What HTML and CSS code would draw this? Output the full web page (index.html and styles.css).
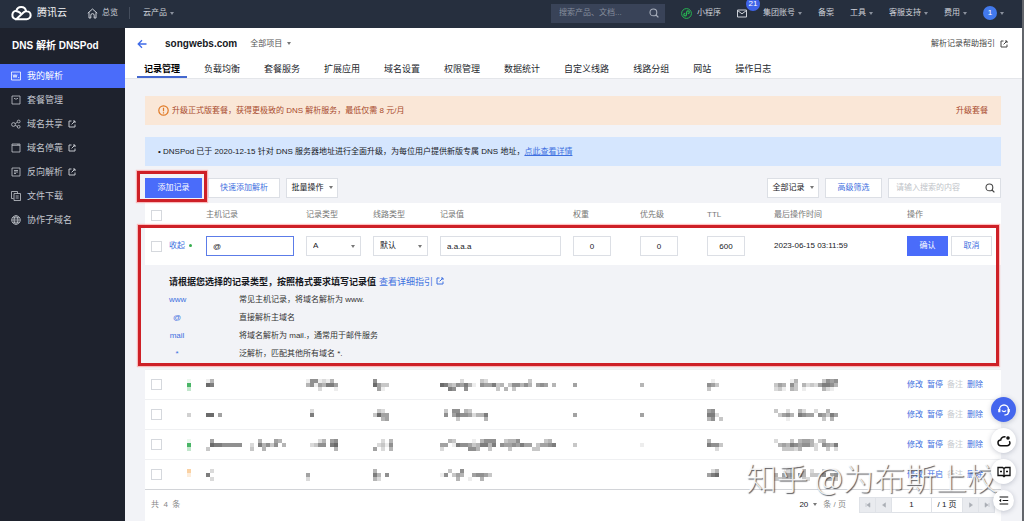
FILE: index.html
```html
<!DOCTYPE html>
<html lang="zh-CN">
<head>
<meta charset="utf-8">
<title>我的解析 - DNSPod</title>
<link rel="stylesheet" href="styles.css">
</head>
<body>
<svg class="defs" width="0" height="0" aria-hidden="true">
  <symbol id="ext" viewBox="0 0 8 8"><path d="M3.5 1H1v6h6V4.500M5 1h2v2M7 1 3.600 4.400" fill="none" stroke="currentColor" stroke-width="1"/></symbol>
  <symbol id="search" viewBox="0 0 10 10"><circle cx="4.400" cy="4.400" r="3.400" fill="none" stroke="currentColor" stroke-width="1.100"/><path d="m7 7 2.400 2.400" stroke="currentColor" stroke-width="1.200"/></symbol>
</svg>

<header class="topbar">
  <a class="brand" href="#">
    <svg width="21" height="16" viewBox="0 0 21 16" fill="none" stroke="#fff" stroke-width="2" stroke-linecap="round"><path d="M4.800 14.200h10.700a4 4 0 0 0 .3-8 3.900 3.900 0 0 0-3.400 1.300L5.500 14"/><path d="M15 5.900a4.900 4.900 0 0 0-9.600-.2 4.300 4.300 0 0 0-.6 8.500"/><path d="M5.600 6.200c1.600 0 2.500.6 3.700 1.800"/></svg>
    <span>腾讯云</span>
  </a>
  <a class="home" href="#">
    <svg width="11" height="11" viewBox="0 0 11 11" fill="none" stroke="currentColor"><path d="M.8 5.200 5.500 1l4.700 4.200M2 4.300V10h1.800V7.300a1.700 1.700 0 0 1 3.400 0V10H9V4.300"/></svg>
    总览
  </a>
  <a class="products caret" href="#">云产品</a>
  <nav class="topnav">
    <label class="topsearch"><input type="text" placeholder="搜索产品、文档..." aria-label="搜索产品、文档"><svg width="10" height="10"><use href="#search"/></svg></label>
    <a class="mini" href="#"><svg width="11" height="11" viewBox="0 0 11 11" fill="none" stroke="#27b552"><circle cx="5.500" cy="5.500" r="4.900"/><path d="M4.300 5.300a1.300 1.300 0 1 0 1.100 1.500L5.700 4a1.300 1.300 0 1 1 1.100 1.500" stroke-width="1.200"/></svg>小程序</a>
    <a class="mail" href="#" aria-label="消息"><svg width="10" height="9" viewBox="0 0 10 9" fill="none" stroke="currentColor"><path d="M.5 1h9v7h-9zM.5 1.500 5 4.800l4.500-3.300"/></svg><span class="badge">21</span></a>
    <a class="caret" href="#">集团账号</a>
    <a href="#">备案</a>
    <a class="caret" href="#">工具</a>
    <a class="caret" href="#">客服支持</a>
    <a class="caret" href="#">费用</a>
    <button class="user caret" type="button"><span>1</span></button>
  </nav>
</header>

<div class="shell">
  <aside class="sidebar">
    <h2>DNS 解析 DNSPod</h2>
    <a class="active" href="#"><svg class="ico" viewBox="0 0 10 10"><path d="M.5 1h9v8h-9zM2 3.500l1 3 1-3 1 3 1-3M7.200 6.500h1"/></svg>我的解析</a>
    <a href="#"><svg class="ico" viewBox="0 0 10 10"><path d="M1 1h8v8H1zM3 3.500h1.200l.8 1 .8-1H7"/></svg>套餐管理</a>
    <a href="#"><svg class="ico" viewBox="0 0 10 10"><circle cx="2.500" cy="5.500" r="1.900"/><circle cx="7.700" cy="2.500" r="1.400"/><circle cx="7.700" cy="7.800" r="1.400"/><path d="m4.200 4.600 2.200-1.400M4.200 6.400l2.200 1"/></svg>域名共享<svg class="ext"><use href="#ext"/></svg></a>
    <a href="#"><svg class="ico" viewBox="0 0 10 10"><path d="M1 1h8v8H1zM1 2.300h8M7 1v1"/></svg>域名停靠<svg class="ext"><use href="#ext"/></svg></a>
    <a href="#"><svg class="ico" viewBox="0 0 10 10"><path d="M1 1h8v8H1zM3 3.500h4M3 5h4M3 6.500h2"/></svg>反向解析<svg class="ext"><use href="#ext"/></svg></a>
    <a href="#"><svg class="ico" viewBox="0 0 10 10"><path d="M2.500 7.500h-2v-7h6v2M3 2.500h6.500v7H3zM4.700 5h3M4.700 7h3"/></svg>文件下载</a>
    <a href="#"><svg class="ico" viewBox="0 0 10 10"><circle cx="5" cy="5" r="4.300"/><ellipse cx="5" cy="5" rx="1.900" ry="4.300"/><path d="M.7 5h8.600M1.300 2.800h7.400M1.300 7.200h7.400"/></svg>协作子域名</a>
  </aside>

  <main class="main">
    <section class="pagehead">
      <div class="titlebar">
        <a class="back" href="#" aria-label="返回"><svg width="10" height="10" viewBox="0 0 10 10" fill="none" stroke="#3e6ae8" stroke-width="1.300"><path d="M9.500 5H1.200M5 1.200 1.200 5 5 8.800"/></svg></a>
        <h1>songwebs.com</h1>
        <button class="project caret" type="button">全部项目</button>
        <a class="guide" href="#">解析记录帮助指引<svg class="ext"><use href="#ext"/></svg></a>
      </div>
      <nav class="tabs">
        <a class="active" href="#">记录管理</a><a href="#">负载均衡</a><a href="#">套餐服务</a><a href="#">扩展应用</a><a href="#">域名设置</a><a href="#">权限管理</a><a href="#">数据统计</a><a href="#">自定义线路</a><a href="#">线路分组</a><a href="#">网站</a><a href="#">操作日志</a>
      </nav>
    </section>

    <section class="content">
      <div class="notice warn">
        <svg width="11" height="11" viewBox="0 0 11 11" fill="none" stroke="#e07a26" stroke-width="1.200"><circle cx="5.500" cy="5.500" r="4.700"/><path d="M5.500 2.700v3.600M5.500 7.200v1.200"/></svg>
        <span>升级正式版套餐，获得更极致的 DNS 解析服务，最低仅需 8 元/月</span>
        <a href="#">升级套餐</a>
      </div>
      <div class="notice info">
        <span>• DNSPod 已于 2020-12-15 针对 DNS 服务器地址进行全面升级，为每位用户提供新版专属 DNS 地址，<a href="#">点此查看详情</a></span>
      </div>

      <div class="toolbar">
        <span class="marked"><button class="btn primary wide" type="button">添加记录</button></span>
        <button class="btn link wider" type="button">快速添加解析</button>
        <button class="btn menu caret" type="button">批量操作</button>
        <span class="spacer"></span>
        <button class="btn menu caret" type="button">全部记录</button>
        <button class="btn link wide" type="button">高级筛选</button>
        <label class="search"><input type="text" placeholder="请输入搜索的内容" aria-label="搜索记录"><svg width="10" height="10"><use href="#search"/></svg></label>
      </div>

      <table class="records">
        <colgroup><col class="c-check"><col class="c-status"><col class="c-host"><col class="c-std"><col class="c-std"><col><col class="c-std"><col class="c-std"><col class="c-std"><col class="c-time"><col class="c-ops"></colgroup>
        <thead>
          <tr><th class="check"><input type="checkbox" aria-label="全选"></th><th></th><th>主机记录</th><th>记录类型</th><th>线路类型</th><th>记录值</th><th>权重</th><th>优先级</th><th>TTL</th><th>最后操作时间</th><th>操作</th></tr>
        </thead>
        <tbody class="editing">
          <tr class="edit">
            <td class="check"><input type="checkbox" aria-label="选择记录"></td>
            <td><a href="#">收起</a><i class="dot"></i></td>
            <td><input class="field host" type="text" value="@" aria-label="主机记录"></td>
            <td><span class="pick caret"><select class="field" aria-label="记录类型"><option>A</option></select></span></td>
            <td><span class="pick caret"><select class="field" aria-label="线路类型"><option>默认</option></select></span></td>
            <td><input class="field value" type="text" value="a.a.a.a" aria-label="记录值"></td>
            <td><input class="field num" type="text" value="0" aria-label="权重"></td>
            <td><input class="field num" type="text" value="0" aria-label="优先级"></td>
            <td><input class="field num" type="text" value="600" aria-label="TTL"></td>
            <td>2023-06-15 03:11:59</td>
            <td><div class="confirm"><button class="btn primary" type="button">确认</button><button class="btn link" type="button">取消</button></div></td>
          </tr>
          <tr class="help">
            <td colspan="11">
              <h3>请根据您选择的记录类型，按照格式要求填写记录值 <a href="#">查看详细指引<svg class="ext"><use href="#ext"/></svg></a></h3>
              <dl>
                <dt>www</dt><dd>常见主机记录，将域名解析为 www.</dd>
                <dt>@</dt><dd>直接解析主域名</dd>
                <dt>mail</dt><dd>将域名解析为 mail.，通常用于邮件服务</dd>
                <dt>*</dt><dd>泛解析，匹配其他所有域名 *.</dd>
              </dl>
            </td>
          </tr>
        </tbody>
        <tbody class="rows" id="rows"></tbody>
      </table>

      <footer class="pager">
        <span class="total">共&nbsp; 4&nbsp; 条</span>
        <button class="size caret" type="button">20</button>
        <span class="unit">条 / 页</span>
        <div class="pages">
          <button type="button" aria-label="首页"><svg viewBox="0 0 6 6"><path d="M1 1v4M5 .8v4.400L1.800 3z"/></svg></button>
          <button type="button" aria-label="上一页"><svg viewBox="0 0 6 6"><path d="M4.500.8v4.400L1.500 3z"/></svg></button>
          <input type="text" value="1" aria-label="页码">
          <span>/ 1 页</span>
          <button type="button" aria-label="下一页"><svg viewBox="0 0 6 6"><path d="M1.500.8v4.400L4.500 3z"/></svg></button>
          <button type="button" aria-label="末页"><svg viewBox="0 0 6 6"><path d="M5 1v4M1 .8v4.400L4.200 3z"/></svg></button>
        </div>
      </footer>
    </section>
  </main>
</div>

<div class="watermark">知乎 @为布斯上校</div>

<div class="floating">
  <button class="main-help" type="button" aria-label="客服"><svg viewBox="0 0 14 14" fill="none" stroke="#fff" stroke-width="1.300"><path d="M2.500 6.500a4.500 4.500 0 0 1 9 0v2.300c0 2.200-1.500 3.200-4 3.200"/><path d="M2.300 6v3.300M11.700 6v3.300" stroke-width="2.200"/><path d="M5 7.500c.9 1.500 3.100 1.500 4 0"/></svg></button>
  <button type="button" aria-label="云助手"><svg viewBox="0 0 14 14" fill="none" stroke="#111" stroke-width="1.500"><path d="M8.500 3A3.600 3.600 0 0 0 3.700 6 2.800 2.800 0 0 0 4 11.700h6.200a2.700 2.700 0 0 0 2-4.500"/><circle cx="11" cy="4" r="1.800" fill="#111" stroke="none"/></svg></button>
  <button type="button" aria-label="文档"><svg viewBox="0 0 14 14" fill="none" stroke="#111" stroke-width="1.300"><path d="M7 3.500v8M1 2.500h4.500L7 3.600l1.500-1.100H13v8H8.500L7 11.700l-1.500-1.200H1zM3 6.500h2M9 6.500h2"/></svg></button>
  <button class="small" type="button" aria-label="收起面板"><svg viewBox="0 0 14 14" fill="none" stroke="#111" stroke-width="1.400"><path d="M2 2.500h11M6 7h7M2 11.500h11"/><path d="M4 4.800v4.400L1.300 7z" fill="#111" stroke="none"/></svg></button>
</div>
<script src="records.js"></script>
</body>
</html>
```

FILE: styles.css
```css
* { box-sizing: border-box; }
body {
  margin: 0;
  min-height: 100vh;
  overflow: hidden;
  background: #f2f3f7;
  color: #16181d;
  font: 8px/12px "Liberation Sans", "Noto Sans CJK SC", sans-serif;
  border-right: 2px solid #62656b;
}
a { color: #3e70e0; text-decoration: none; }
button, input, select { font: inherit; color: inherit; margin: 0; }
button { padding: 0; border: 0; background: none; white-space: nowrap; }
h1, h2, h3, dl, dd { margin: 0; }
.defs { position: absolute; }
.ext { width: 8px; height: 8px; margin-left: 5px; flex: none; }

.caret::after {
  content: "";
  display: inline-block;
  border: 2px solid transparent;
  border-top: 3px solid #777;
  border-bottom: 0;
  margin-left: 5px;
  vertical-align: middle;
}

/* top bar */
.topbar {
  height: 28px;
  padding: 0 18px 2px 11px;
  display: flex;
  align-items: center;
  background: #262f3e;
  color: #cdd1d8;
  white-space: nowrap;
}
.topbar a { color: inherit; display: flex; align-items: center; }
.topbar .caret::after { border-top-color: #8a919d; margin-left: 3px; }
.topbar .brand { gap: 5px; color: #f2f3f5; font-size: 10px; }
.home { gap: 4px; margin-left: 20px; padding-right: 11px; border-right: 1px solid #444d5c; }
.products { margin-left: 13px; }
.topnav { margin-left: auto; display: flex; align-items: center; gap: 16px; }
.topsearch {
  width: 114px;
  height: 19px;
  padding: 0 6px 0 8px;
  display: flex;
  align-items: center;
  background: #394358;
  color: #a9b0bd;
}
.topsearch input, .search input { flex: 1; min-width: 0; padding: 0; border: 0; outline: 0; background: none; }
.topsearch input::placeholder { color: #858d9c; }
.mini { gap: 5px; }
.mail { position: relative; }
.badge {
  position: absolute;
  left: 9px;
  top: -12px;
  min-width: 14px;
  height: 14px;
  border-radius: 7px;
  background: #3f63e8;
  color: #fff;
  line-height: 14px;
  text-align: center;
}
.user { display: flex; align-items: center; }
.user span { width: 14px; height: 14px; border-radius: 50%; background: #4279ec; color: #fff; line-height: 14px; text-align: center; }

/* navigation */
.shell { display: flex; min-height: calc(100vh - 28px); }
.sidebar { flex: 0 0 125px; background: #1e222d; color: #c3c6cd; font-size: 9px; }
.sidebar h2 { height: 36px; padding-left: 12px; color: #fff; font-size: 10px; line-height: 36px; white-space: nowrap; }
.sidebar a { height: 24px; padding-left: 11px; display: flex; align-items: center; color: inherit; }
.sidebar a.active { background: #4a6cfa; color: #fff; }
.ico { width: 10px; height: 10px; margin-right: 6px; fill: none; stroke: currentColor; stroke-width: 0.8; }

/* page heading */
.main { flex: 1; min-width: 0; }
.pagehead { background: #fff; border-bottom: 1px solid #e4e6ea; }
.titlebar { height: 32px; padding: 0 14px 0 12px; display: flex; align-items: center; }
.back { width: 28px; height: 10px; }
h1 { font-size: 10px; line-height: 16px; }
.project { margin-left: 13px; color: #555; }
.guide { margin-left: auto; color: #444; display: flex; align-items: center; }
.tabs { display: flex; gap: 10px; padding-left: 12px; font-size: 9px; white-space: nowrap; }
.tabs a { height: 18px; padding: 0 7px; line-height: 18px; color: #24272d; border-bottom: 2px solid transparent; }
.tabs .active { color: #000; font-weight: bold; border-color: #4468cf; }

/* notices and toolbar */
.content { padding: 17px 21px 0 20px; }
.notice { display: flex; align-items: center; height: 29px; padding: 0 13px; margin-bottom: 12px; white-space: nowrap; }
.warn { background: #fae7d7; color: #a84a2c; gap: 3px; }
.warn a { margin-left: auto; color: inherit; }
.info { background: #d5e6fe; }
.info a { text-decoration: underline; }
.toolbar { display: flex; gap: 6px; margin-bottom: 5px; }
.spacer { flex: 1; }
.btn { height: 20px; min-width: 41px; border: 1px solid #dcdfe5; background: #fff; }
.btn.primary { background: #4a6cfa; border-color: #4a6cfa; color: #fff; }
.btn.link { color: #3e70e0; }
.btn.wide { width: 57px; }
.btn.wider { width: 72px; }
.btn.menu { width: 52px; }
.marked { position: relative; height: 20px; }
.marked::after, .editing::after {
  content: "";
  position: absolute;
  inset: -7px -5px -4px -8px;
  border: 3px solid #ce2027;
  box-shadow: 0 0 1px 1px rgba(255, 130, 130, 0.5);
  pointer-events: none;
}
.search { width: 113px; height: 20px; padding: 0 5px 0 7px; display: flex; align-items: center; background: #fff; border: 1px solid #dcdfe5; color: #444; }
.search input::placeholder { color: #c0c3c8; }

/* records table */
.records { width: 100%; table-layout: fixed; border-collapse: collapse; background: #fff; }
.c-check { width: 24px; }
.c-status { width: 37px; }
.c-host { width: 100px; }
.c-std { width: 67px; }
.c-time { width: 133px; }
.c-ops { width: 94px; }
.records th, .records td { padding: 0; text-align: left; white-space: nowrap; }
.records th { height: 24px; color: #777; font-weight: normal; }
.records .check { padding-left: 6px; }
.check input { appearance: none; display: block; width: 11px; height: 11px; border: 1px solid #d5d8dd; background: #fff; }
.editing { position: relative; }
.editing::after { inset: -2px 2px 4px -7px; }
.edit td { height: 38px; }
.dot { display: inline-block; width: 3px; height: 3px; margin-left: 4px; border-radius: 50%; background: #35ad4e; vertical-align: middle; }
.field { display: block; height: 20px; padding: 0 6px; border: 1px solid #dcdfe5; border-radius: 0; background: #fff; outline: 0; appearance: none; }
.field.host { width: 88px; border-color: #5c7ce8; }
.field.value { width: calc(100% - 12px); }
.field.num { width: 38px; text-align: center; }
.pick { display: block; width: 55px; position: relative; }
.pick .field { width: 100%; }
.pick::after { position: absolute; right: 6px; top: 9px; }
.confirm { display: flex; gap: 3px; }
.help { background: #f2f3f7; }
.records .help td { padding: 8px 24px 6px; }
.help h3 { display: flex; align-items: center; gap: 3px; font-size: 9px; line-height: 18px; }
.help h3 a { font-weight: normal; }
.help h3 .ext { margin-left: 3px; }
.help dl { display: grid; grid-template-columns: 16px 1fr; column-gap: 54px; line-height: 18px; }
.help dt { color: #3e70e0; text-align: center; }
.help dd { color: #333; }
.rows tr { border-top: 1px solid #eff0f2; border-bottom: 1px solid #eff0f2; }
.rows tr:last-child { border-bottom-color: #d2d4d8; }
.rows td { height: 30px; }
.mosaic { display: block; overflow: visible; color: #333; }
.mosaic.state { margin-left: 18px; }
.mosaic.on { color: #21a544; }
.mosaic.off { color: #999; }
.mosaic.paused { color: #f39a35; }
.ops { display: flex; gap: 4px; }
.ops .disabled { color: #c8cbd0; }

/* pagination */
.pager { display: flex; align-items: center; height: 40px; padding: 0 6px 10px; background: #fff; }
.total, .unit { color: #888; }
.size { margin-left: auto; }
.unit { margin: 0 13px 0 6px; }
.pages { display: flex; gap: 1px; height: 16px; background: #dfe2e7; border: 1px solid #dfe2e7; }
.pages button { width: 15px; background: #e9ebef; }
.pages svg { display: block; width: 6px; height: 6px; margin: 0 auto; fill: #aaaeb5; stroke: #aaaeb5; stroke-width: 0.5; }
.pages input { width: 39px; padding: 0; border: 0; text-align: center; }
.pages span { width: 30px; background: #fff; text-align: center; line-height: 14px; }

/* overlays */
.watermark {
  position: absolute;
  right: 26px;
  bottom: 26px;
  color: rgba(255, 255, 255, 0.85);
  font: 300 31px/36px "Noto Sans CJK SC", sans-serif;
  text-shadow: 1px 1px 1px rgba(60, 60, 65, 0.85);
  white-space: nowrap;
  pointer-events: none;
}
.floating { position: absolute; right: 8px; bottom: 10px; display: flex; flex-direction: column; align-items: center; gap: 6px; }
.floating button { width: 25px; height: 25px; border-radius: 50%; background: #fff; box-shadow: 0 1px 5px rgba(40, 50, 80, 0.25); }
.floating .main-help { background: #4466ee; }
.floating .small { width: 21px; height: 21px; }
.floating svg { display: block; width: 14px; height: 14px; margin: 0 auto; }
.floating .small svg { width: 11px; height: 11px; }
```

FILE: records.js
```js
// Masked records: each value is three lines of 4px blocks, a digit giving the darkness of one block.
const BLOCK = 4;
const records = [
  { state: "on", cells: ["14/87/00", "16612140/46154775/00020001", "6000/8533/0510",
    "00000200003200000000003000000/87436574106557340366464056504/00760060000000304030000000000",
    "0/5/0", "0/4/0", "010/653/300", "0000140000003656/3540630423257764/2310430100004210"] },
  { state: "off", cells: ["0000/8805/0000", "02/07/00", "0320/3855/0045",
    "030660430000/060576652447/000030000004", "0/5/0", "0/5/0", "5600/7720/4603",
    "3002004200200400/0356407655065375/0001000000003040"] },
  { state: "on", cells: ["05000000000004000540/08776666600207463604/30000000000300400000", "00024056/02366078/00000004", "00204/02316/50204",
    "004300001046660034460000003400/550176653477470655657550355670/200000066400300003000003300000",
    "0/3/0", "0/1/0", "4000/7663/0020", "2000304554034000/0454765664206547/0033324000200302"] },
  { state: "paused", cells: ["02/70/02", "0/5/2", "4000/7406/4200",
    "0030060000000/1603540056653/0000400100400", "0/0/0", "0/0/0", "024/578/000",
    "0002400402003000/4055606403336056/3344500320000443"] }
];

function mosaic(pattern, extra = "") {
  const lines = pattern.split("/");
  const width = lines[0].length * BLOCK;
  let rects = "";
  lines.forEach((line, y) => [...line].forEach((d, x) => {
    if (d !== "0") rects += `<rect x="${x * BLOCK}" y="${y * BLOCK}" width="${BLOCK}" height="${BLOCK}" fill="currentColor" fill-opacity="${d / 11}"/>`;
  }));
  return `<svg class="mosaic ${extra}" width="${width}" height="12">${rects}</svg>`;
}

document.getElementById("rows").innerHTML = records.map(r => {
  const mark = { on: "1/9/3", off: "0/5/0", paused: "5/2/0" }[r.state];
  const toggle = r.state === "paused" ? "开启" : "暂停";
  return `<tr><td class="check"><input type="checkbox" aria-label="选择记录"></td>
    <td>${mosaic(mark, "state " + r.state)}</td>
    ${r.cells.map(c => `<td>${mosaic(c)}</td>`).join("")}
    <td><div class="ops"><a href="#">修改</a><a href="#">${toggle}</a><span class="disabled">备注</span><a href="#">删除</a></div></td></tr>`;
}).join("");
```
